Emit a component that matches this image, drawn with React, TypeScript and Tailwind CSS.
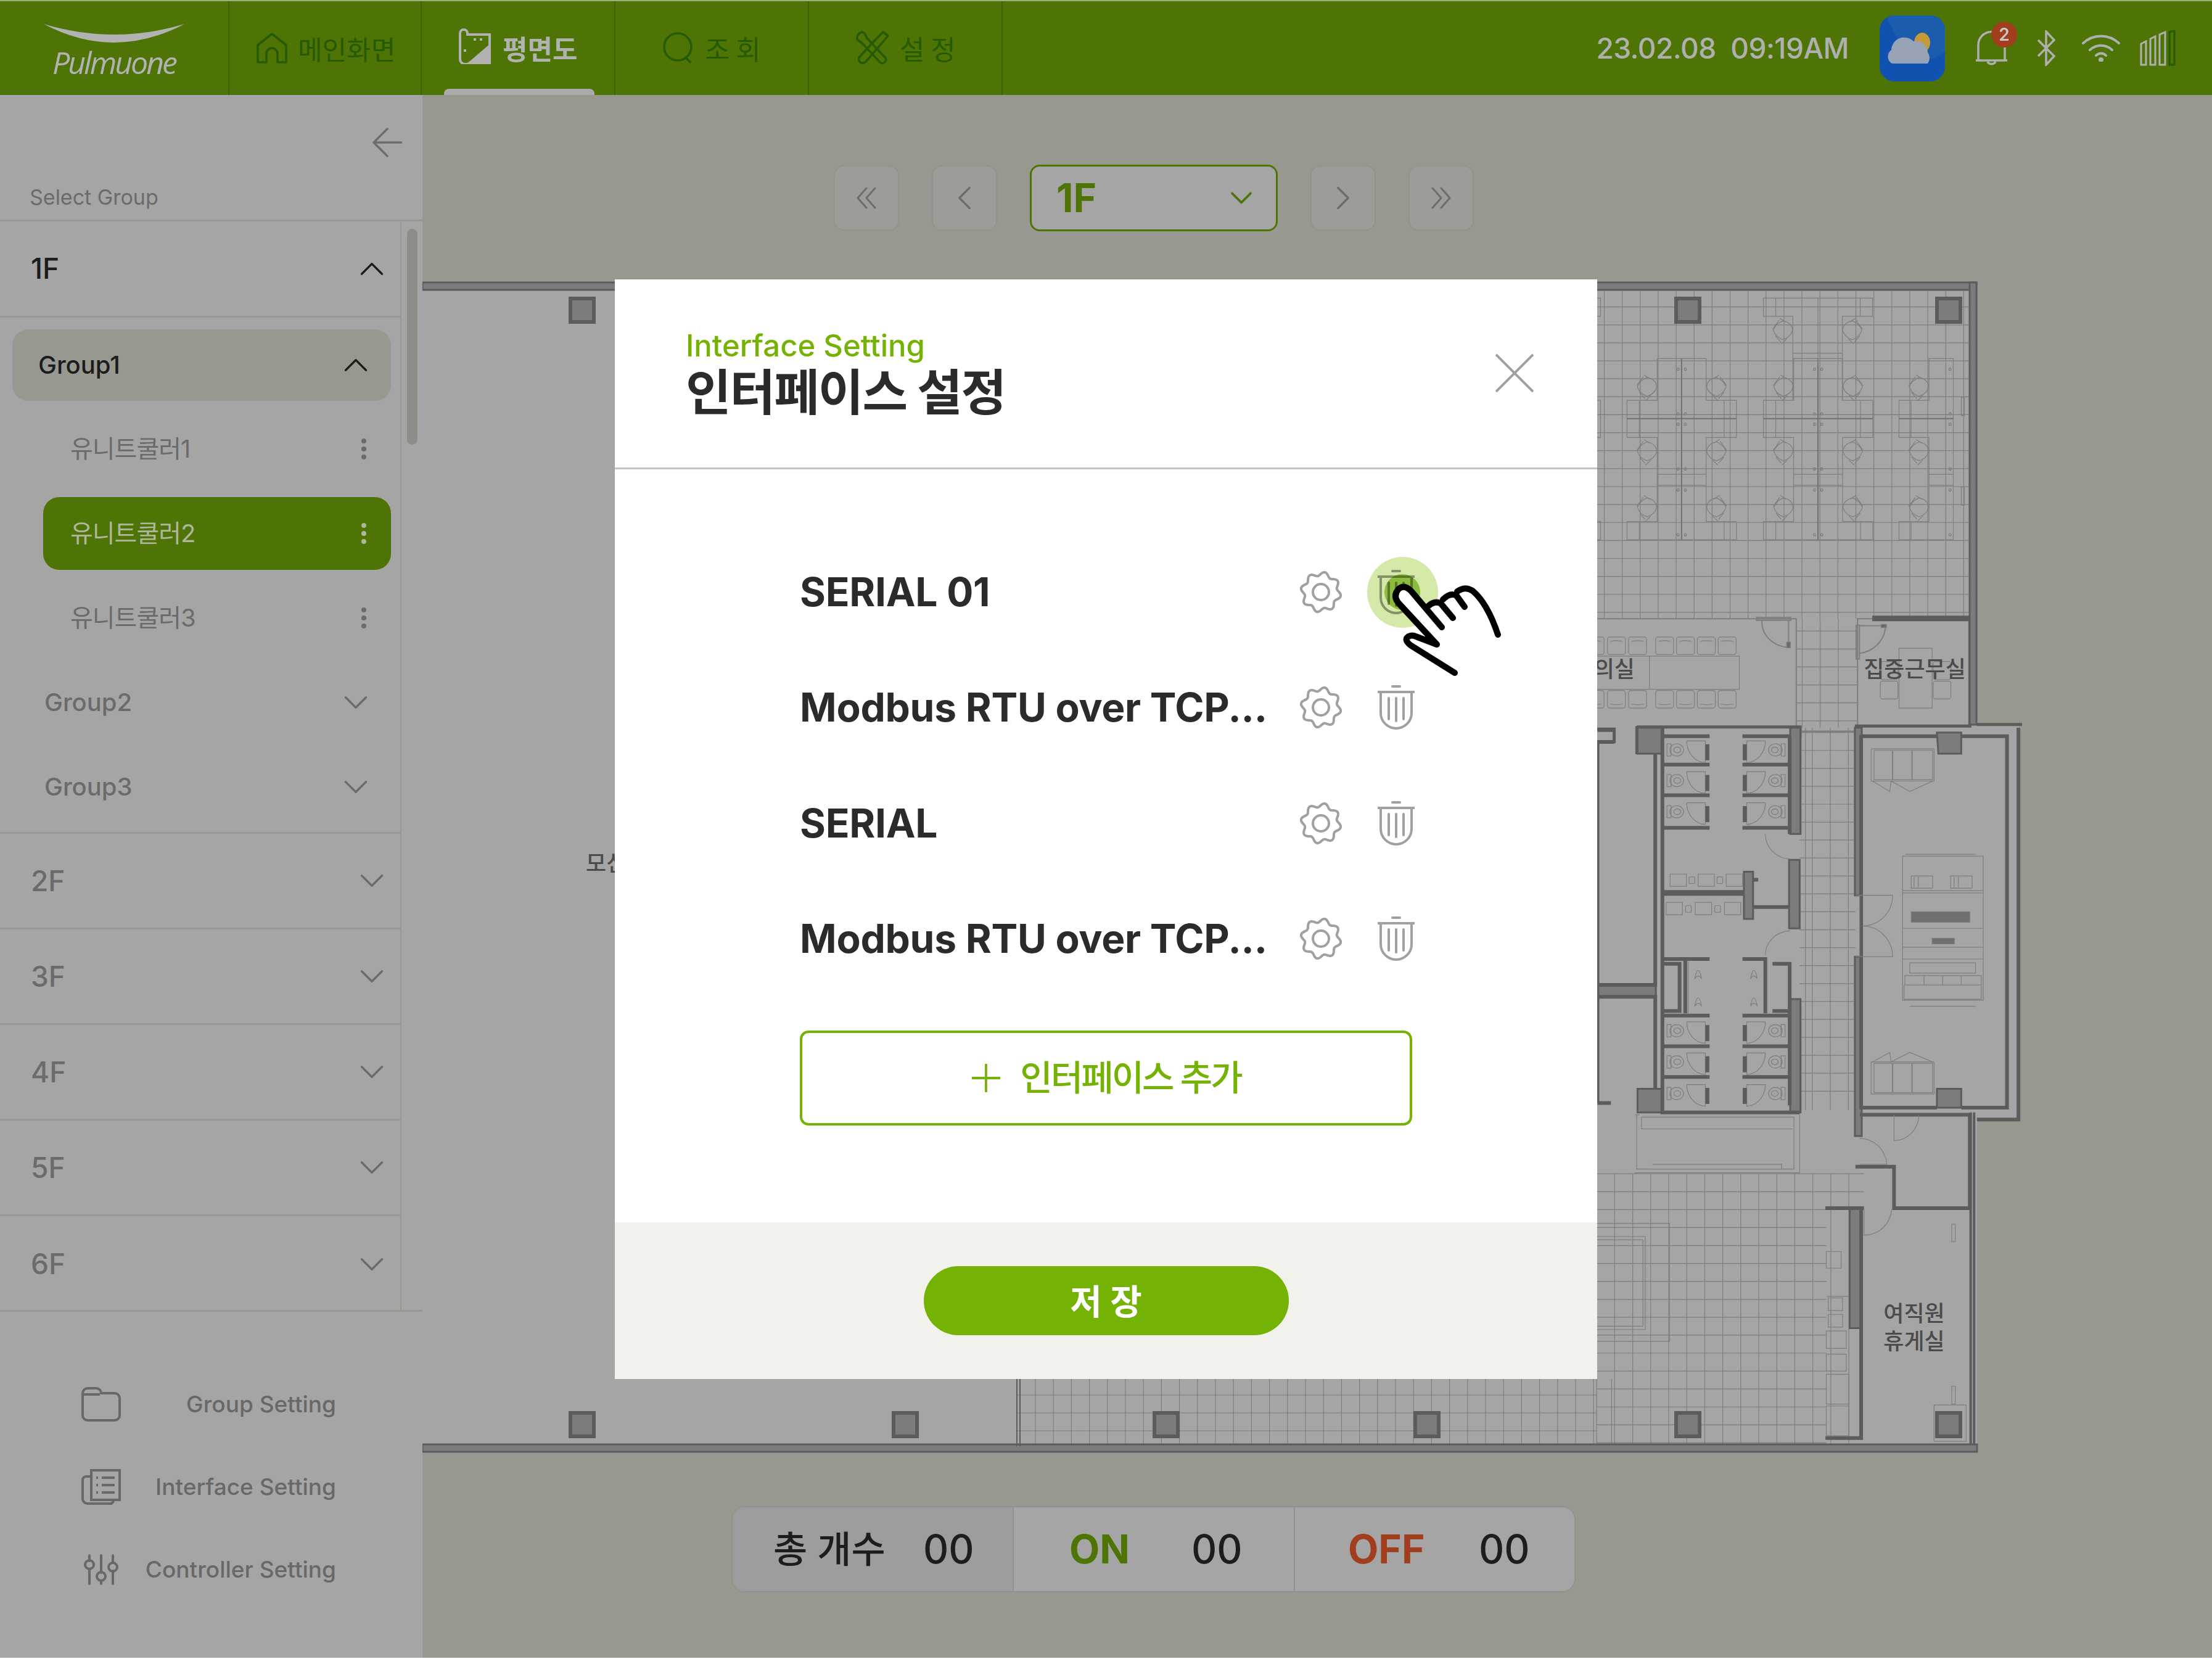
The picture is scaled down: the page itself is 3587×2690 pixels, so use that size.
import React from 'react'
import { ChevronDown, ChevronLeft, ChevronRight, ChevronUp } from 'lucide-react'

const floors = ['2F', '3F', '4F', '5F', '6F']
const units = ['유니트쿨러1', '유니트쿨러2', '유니트쿨러3']
const interfaces = ['SERIAL 01', 'Modbus RTU over TCP...', 'SERIAL', 'Modbus RTU over TCP...']
const range = (n: number) => Array.from({ length: n }, (_, i) => i)

const gearPath = (() => {
  const pts = range(97).map((i) => {
    const t = (i / 96) * Math.PI * 2
    const r = 29.5 + 3.2 * Math.cos(8 * t - Math.PI / 2)
    return `${(34 + r * Math.cos(t)).toFixed(1)} ${(34 + r * Math.sin(t)).toFixed(1)}`
  })
  return 'M' + pts.join('L') + 'Z'
})()

const Gear = () => (
  <svg width="68" height="68" viewBox="0 0 68 68" fill="none" stroke="#a0a0a0" strokeWidth="4">
    <path d={gearPath} strokeLinejoin="round" />
    <circle cx="34" cy="34" r="13" />
  </svg>
)

const Trash = () => (
  <svg width="60" height="72" viewBox="0 0 60 72" fill="none" stroke="#a0a0a0" strokeWidth="4" strokeLinecap="round">
    <path d="M24 2H36M1 11H59M5 11V45A25 25 0 0 0 55 45V11M18 21V55M30 21V58M42 21V55" />
  </svg>
)

const Hand = () => (
  <svg className="absolute left-[1003px] top-[397px] pointer-events-none" width="500" height="300" viewBox="0 0 500 300">
    <path
      d="M263 112L275 100L283 107L317 132L333 125L353 112L377 103L387 107L407 132L429 179L359 241L287 196L282 187L293 181L330 195L265 123Z"
      fill="#ffffff"
    />
    <path
      d="M359 241L287 196Q276 187 284 182Q290 179 296 182L330 195L268 128Q258 116 268 105Q277 97 288 108L338 167M317 132Q326 124 336 128L356 152M340 122Q352 110 362 116L375 134M363 109Q376 100 388 108Q412 128 429 179"
      fill="none"
      stroke="#000000"
      strokeWidth="10"
      strokeLinecap="round"
      strokeLinejoin="round"
    />
  </svg>
)

const DoubleChevron = ({ flip }: { flip?: boolean }) => (
  <svg className={flip ? '-scale-x-100' : ''} width="36" height="36" viewBox="0 0 36 36" fill="none" stroke="#6d6d6d" strokeWidth="3" strokeLinecap="round" strokeLinejoin="round">
    <path d="M18 2L4 18L18 34M32 2L18 18L32 34" />
  </svg>
)

const Chair = ({ x, y, f = 1 }: { x: number; y: number; f?: number }) => (
  <g transform={`translate(${x} ${y}) scale(${f} 1)`}>
    <path d="M-36 0Q-28 -20 0 -30Q34 -24 36 0Q30 22 0 30Q-28 22 -36 0Z" />
    <path d="M-38 -4L-14 -32M-28 18L-8 38M-12 -38L10 -26M14 28L-6 44" />
  </g>
)

const Cluster = ({ x, top }: { x: number; top?: boolean }) => (
  <g transform={`translate(${x} 0)`}>
    <path d="M296 277V410H183V528H296V795H183V853H592V795H479V528H592V410H479V277M183 468H592" />
    {!top && <path d="M296 277H479" />}
    <path d="M296 645H479M296 680H479M229 410V528M546 410V528M229 795V853M546 795V853" />
    <path d="M387 277V853" stroke="#707070" strokeWidth="2" />
    <path d="M183 468H592" stroke="#707070" strokeWidth="2" />
    {[311, 453, 486, 628, 695, 837].map((y) => (
      <g key={y}>
        <circle cx="374" cy={y} r="4" />
        <circle cx="401" cy={y} r="4" />
      </g>
    ))}
    {[367, 572, 750].map((y) => (
      <g key={y}>
        <Chair x={258} y={y} />
        <Chair x={517} y={y} f={-1} />
      </g>
    ))}
  </g>
)

const Toilet = ({ x, y, f = 1 }: { x: number; y: number; f?: number }) => (
  <g transform={`translate(${x} ${y}) scale(${f} 1)`}>
    <rect x="-34" y="-13" width="14" height="26" />
    <ellipse cx="0" cy="0" rx="24" ry="13" />
    <ellipse cx="2" cy="0" rx="12" ry="6" />
    <path d="M35 -19H100V27M35 -19A68 46 0 0 0 100 27" />
    <rect x="100" y="-12" width="14" height="34" fill="#5c5c5c" stroke="none" />
  </g>
)

const Column = ({ x, y }: { x: number; y: number }) => (
  <rect x={x - 19} y={y - 19} width="38" height="38" fill="#7c7c7c" stroke="#5c5c5c" strokeWidth="6" />
)

const Stalls = ({ ys }: { ys: number[] }) => (
  <>
    {ys.map((y) => (
      <g key={y}>
        <Toilet x={345} y={y} />
        <Toilet x={690} y={y} f={-1} />
      </g>
    ))}
  </>
)

const FloorPlan = () => (
  <svg
    className="block shrink-0 [&_*]:[vector-effect:non-scaling-stroke]"
    width="2595"
    height="1910"
    viewBox="686 450 2595 1910"
    fill="none"
    stroke="#7e7e7e"
    strokeWidth="1.2"
  >
    <path d="M686 458H3206V1175H3275V1815H3207V2355H686Z" fill="#a5a5a5" stroke="none" />

    {/* lower tiled floor */}
    {range(33).map((i) => (
      <path key={i} d={`M${1680 + i * 29.2} 2236V2343`} />
    ))}
    {[2262, 2291, 2320].map((y) => (
      <path key={y} d={`M1650 ${y}H2590`} />
    ))}

    {/* upper right: workstations */}
    <g transform="translate(2560 440) scale(0.4337 0.5102)">
      {range(21).map((i) => (
        <path key={i} d={`M${98 + i * 67.2} 60V1103`} />
      ))}
      {range(18).map((i) => (
        <path key={i} d={`M68 ${113 + i * 57.1}H1465`} />
      ))}
      {[838, 905, 973].map((x) => (
        <path key={x} d={`M${x} 1103V1450`} />
      ))}
      {range(6).map((i) => (
        <path key={i} d={`M816 ${1143 + i * 57.1}H1045`} />
      ))}
      <g>
        <rect x="68" y="85" width="16" height="58" />
        <rect x="68" y="410" width="16" height="118" />
        <rect x="68" y="795" width="16" height="58" />
        <Cluster x={0} />
        <Cluster x={510} top />
        <path d="M693 85H1101V143H988V410M693 85V143H803V410M739 85V143M1055 85V143M803 260H988M803 277H988M897 85V300" />
        <Chair x={766} y={187} />
        <Chair x={1025} y={187} f={-1} />
        <path d="M1312 277H1403V853H1200V795H1312V528H1200V410H1312V277M1200 468H1403M1245 410V528M1245 795V853M1312 645H1403M1312 680H1403" />
        <path d="M1200 468H1403" stroke="#707070" strokeWidth="2" />
        {[367, 572, 750].map((y) => (
          <Chair key={y} x={1275} y={y} />
        ))}
        {[311, 453, 486, 628, 695, 837].map((y) => (
          <circle key={y} cx="1391" cy={y} r="4" />
        ))}
        <rect x="1433" y="400" width="11" height="58" />
        <rect x="1433" y="685" width="11" height="58" />
      </g>
      {/* meeting room + focus room */}
      <path d="M68 1104H816V1445M1045 1445V1104H1100" strokeWidth="2" />
      <rect x="68" y="1223" width="535" height="105" />
      <path d="M267 1223V1328" />
      {[30, 110, 189, 290, 368, 446, 524].map((x) => (
        <g key={x}>
          <rect x={x} y="1162" width="67" height="56" rx="8" />
          <rect x={x} y="1332" width="67" height="56" rx="8" />
          <path d={`M${x + 10} 1176Q${x + 33} 1172 ${x + 57} 1176M${x + 10} 1375Q${x + 33} 1379 ${x + 57} 1375`} />
        </g>
      ))}
      <rect x="667" y="1100" width="128" height="9" strokeWidth="2" />
      <path d="M688 1108A105 80 0 0 0 787 1195V1108" strokeWidth="2" />
      <rect x="780" y="1178" width="14" height="18" fill="#6a6a6a" />
      <rect x="1040" y="1124" width="12" height="108" strokeWidth="2" />
      <path d="M1050 1126H1150A110 92 0 0 1 1050 1214" strokeWidth="2" />
      <rect x="1133" y="1122" width="20" height="10" fill="#6a6a6a" />
      <rect x="1200" y="1198" width="124" height="190" />
      {[1240, 1302].map((y) => (
        <g key={y}>
          <rect x="1130" y={y} width="66" height="57" rx="8" />
          <rect x="1328" y={y} width="66" height="57" rx="8" />
        </g>
      ))}
      {/* walls */}
      <path d="M1465 1103V1445H1035M1490 1440H1660" stroke="#5c5c5c" strokeWidth="5" />
      <path d="M1100 1103H1465" stroke="#5c5c5c" strokeWidth="9" />
      <path d="M220 1448H830V1480M68 1455H135V1495H68" stroke="#5c5c5c" strokeWidth="5" />
      <path d="M830 1462H1035" strokeWidth="3" />
      <path d="M220 1450H312V1530H220Z" fill="#7c7c7c" stroke="#5c5c5c" strokeWidth="5" />
    </g>

    {/* lower right: toilets, machine room, rest room */}
    <g transform="translate(2560 1180) scale(0.4637 0.7653)">
      {[795, 819, 882, 945].map((x) => (
        <path key={x} d={`M${x} 0V810`} />
      ))}
      {range(21).map((i) => (
        <path key={i} d={`M775 ${10 + i * 38}H970`} />
      ))}
      {range(15).map((i) => (
        <path key={i} d={`M${65 + i * 63} 945V1520`} />
      ))}
      {range(16).map((i) => (
        <path key={i} d={`M65 ${945 + i * 38}H${i < 2 ? 1000 : 868}`} />
      ))}

      <g fill="#7c7c7c" stroke="#5c5c5c" strokeWidth="3">
        <path d="M208 0H295V55H208Z" />
        <path d="M208 765H295V815H208Z" />
        <path d="M742 0H778V225H742ZM738 280H775V425H738ZM742 575H778V815H742Z" />
        <path d="M580 305H612V405H580Z" />
        <path d="M68 545H272V570H68Z" />
        <path d="M968 0H992V355H968ZM968 485H992V865H968ZM950 1020H990V1272H950Z" />
        <path d="M1255 10H1340V55H1260ZM1255 805V765H1340V805Z" />
      </g>
      <g stroke="#5c5c5c" strokeWidth="6">
        <path d="M65 30H125M270 55V545H68M68 30V795M68 570H270V765M68 795H115M68 5H125" />
        <path d="M295 0V815H775M295 225V485M295 18H460M575 18H740M740 18V225M295 212H460M575 212H740M295 348H580M295 352H580M612 380H740M612 322H630" />
        <path d="M295 490H460M575 490H655V605M375 490V605M295 500H355V600H295M680 500H740V600H680M295 610H460M575 610H740M740 575V800" />
        <path d="M295 78H460M295 143H460M575 78H740M575 143H740M295 675H460M295 740H460M575 675H740M575 740H740" />
        <path d="M990 18H1255M1340 18H1500V805H1340M1255 805H990V15" />
        <path d="M970 930H1105V1018H1370V820H985M865 1018H1000M865 1505H990V1272M990 1020V1505" />
      </g>
      <path d="M1373 815V1530M1385 815V1530" stroke="#5c5c5c" strokeWidth="4" />
      <path d="M1395 830H1540V0" stroke="#5c5c5c" strokeWidth="6" />
      <path d="M0 1530H1395" stroke="#5c5c5c" strokeWidth="8" />
      <path d="M0 1520H1385" stroke="#5c5c5c" strokeWidth="2" />

      <Stalls ys={[47, 112, 178, 642, 708, 775]} />

      {/* sinks */}
      {[322, 420, 518].map((x) => (
        <rect key={x} x={x} y="310" width="57" height="26" />
      ))}
      {[388, 486].map((x) => (
        <rect key={x} x={x} y="316" width="20" height="14" rx="3" />
      ))}
      {[308, 410, 512].map((x) => (
        <rect key={x} x={x} y="370" width="57" height="26" />
      ))}
      {[376, 478].map((x) => (
        <rect key={x} x={x} y="377" width="20" height="14" rx="3" />
      ))}
      {[
        [420, 520],
        [420, 578],
        [615, 520],
        [615, 578],
      ].map(([x, y]) => (
        <path key={`${x}${y}`} d={`M${x - 12} ${y + 12}Q${x} ${y - 24} ${x + 12} ${y + 12}Q${x} ${y} ${x - 12} ${y + 12}Z`} />
      ))}
      <path d="M385 495V605M655 225A90 52 0 0 0 742 278M655 482A90 52 0 0 1 742 430" />

      {/* lobby desk */}
      <path d="M205 820V935H755V825H222V850H750M198 820H215M198 943H775V820M260 925H712V935" />
      <path d="M65 1050H320V1300H65M65 1078H235V1275H65M65 1085H227V1268H65" />
      <path d="M868 1110H920V1145H868ZM868 1205H948M875 1208H925V1235H875ZM875 1243H925V1270H875ZM868 1278H938V1315H868ZM868 1327H938V1363H868ZM868 1370H947V1433H868ZM868 1437H947V1500H868Z" />
      <path d="M1105 820V875A90 55 0 0 0 1192 820M1000 1020V1075A95 60 0 0 0 1097 1020M985 870A95 60 0 0 1 1080 925H985" />
      <rect x="1307" y="1052" width="12" height="37" />
      <rect x="1307" y="1395" width="12" height="38" />
      <rect x="1245" y="1435" width="112" height="77" />
      <Column x={1299} y={1477} />
      <Column x={385} y={1477} />

      {/* machine room */}
      {[45, 708].map((y) => (
        <g key={y}>
          <rect x="1025" y={y} width="220" height="68" />
          <rect x="1035" y={y + 3} width="205" height="62" />
          <path d={`M1100 ${y + 3}V${y + 65}M1168 ${y + 3}V${y + 65}`} strokeWidth="2" />
        </g>
      ))}
      <path d="M1030 113L1090 135L1095 113L1160 135L1240 113M1030 708L1090 688L1095 708L1160 688L1240 708" />
      <rect x="1135" y="272" width="282" height="305" />
      <path d="M1145 268H1390M1135 345H1415M1135 350H1415M1135 425H1415M1135 465H1415M1135 490H1415M1160 498H1390V520H1160ZM1143 525H1410V545H1143ZM1210 525V545M1275 525V545M1340 525V545M1140 545V575H1410V545M1160 590H1390" />
      <path d="M1165 314H1240V340H1165ZM1303 314H1378V340H1303ZM1175 316V338M1190 316V338M1315 316V338M1330 316V338" />
      <rect x="1165" y="390" width="205" height="22" fill="#6f6f6f" />
      <rect x="1238" y="446" width="78" height="12" fill="#6f6f6f" />
      <path d="M970 355H1100A105 65 0 0 1 995 420A105 65 0 0 1 1100 485H970M985 355V485" />
    </g>

    {/* outer walls */}
    <rect x="686" y="458" width="2520" height="12" fill="#7c7c7c" stroke="#5c5c5c" strokeWidth="3" />
    <rect x="3195" y="458" width="11" height="717" fill="#7c7c7c" stroke="#5c5c5c" strokeWidth="3" />
    <rect x="686" y="2342" width="2521" height="12" fill="#7c7c7c" stroke="#5c5c5c" strokeWidth="3" />
    <path d="M1650 2236V2345M1655 2236V2345" stroke="#5c5c5c" strokeWidth="2" />
    {[
      [945, 503],
      [2738, 503],
      [3161, 503],
      [945, 2310],
      [1469, 2310],
      [1892, 2310],
      [2315, 2310],
      [2738, 2310],
      [3161, 2310],
    ].map(([x, y]) => (
      <Column key={`${x}-${y}`} x={x} y={y} />
    ))}

    <g stroke="none" fill="#4b4b4b" fontSize="36" fontWeight="500">
      <text x="951" y="1413">모신</text>
      <text x="2652" y="1098" textAnchor="end">회의실</text>
      <text x="3106" y="1098" textAnchor="middle">집중근무실</text>
      <text x="3105" y="2143" textAnchor="middle">여직원</text>
      <text x="3105" y="2188" textAnchor="middle">휴게실</text>
    </g>
  </svg>
)

const NavItem = ({ label, children, active }: { label: string; children: React.ReactNode; active?: boolean }) => (
  <div className="relative w-[314px] h-full flex items-center pl-[32px] gap-[17px] border-r-[2px] border-[#406203]">
    {children}
    <span className={`text-[44px] ${active ? 'text-[#b2b2b2] font-bold' : 'text-[#265a00]'}`}>{label}</span>
    {active && <div className="absolute left-[36px] bottom-0 w-[244px] h-[10px] rounded-t-[8px] bg-[#aaaaaa]" />}
  </div>
)

const Header = () => (
  <div className="h-[154px] shrink-0 flex items-center bg-[#4e7405] border-t-[2px] border-[#9aad72]">
    <div className="w-[372px] h-full flex flex-col items-center pt-[37px] border-r-[2px] border-[#406203]">
      <svg width="228" height="32" viewBox="73 39 228 32">
        <path d="M73 39Q187 73 301 39Q187 99 73 39Z" fill="#b2b2b2" />
      </svg>
      <span className="mt-[2px] font-['Open_Sans'] italic text-[50px] leading-[56px] text-[#b2b2b2] tracking-[-3px] font-normal">
        Pulmuone
      </span>
    </div>
    <div className="w-[312px] h-full flex items-center pl-[44px] gap-[17px] border-r-[2px] border-[#406203]">
      <svg width="50" height="50" viewBox="0 0 50 50" fill="none" stroke="#265a00" strokeWidth="3.5" strokeLinejoin="round">
        <path d="M2 20L25 2L48 20V48H34V34A9 9 0 0 0 16 34V48H2Z" />
      </svg>
      <span className="text-[43px] text-[#265a00]">메인화면</span>
    </div>
    <NavItem label="평면도" active>
      <svg className="-mt-[6px] ml-[28px]" width="54" height="58" viewBox="0 0 54 58" fill="none" stroke="#b2b2b2" strokeWidth="4">
        <path d="M14 10H50V40L14 58H10A8 8 0 0 1 2 50V8A6 6 0 0 1 14 8Z" />
        <path d="M12 58L52 24V58Z" fill="#b2b2b2" stroke="none" />
        <path d="M24 18H40M8 36H14" strokeDasharray="4 6" />
      </svg>
    </NavItem>
    <NavItem label="조 회">
      <svg className="ml-[44px]" width="52" height="52" viewBox="0 0 52 52" fill="none" stroke="#265a00" strokeWidth="3.5">
        <circle cx="25" cy="24" r="22" />
        <path d="M38 41L46 50" />
      </svg>
    </NavItem>
    <NavItem label="설 정">
      <svg className="ml-[42px]" width="56" height="56" viewBox="0 0 56 56" fill="none" stroke="#265a00" strokeWidth="3.5" strokeLinejoin="round">
        <path d="M12 2A10 10 0 0 0 4 14L12 20L42 52A6 6 0 0 0 50 44L20 12L16 4ZM46 2L54 8L44 20L18 50A6 6 0 0 1 8 42L34 14Z" />
      </svg>
    </NavItem>
    <div className="flex-1 h-full flex items-center justify-end pr-[59px] font-['Inter']">
      <span className="text-[46px] font-medium text-[#b0b0b0] tracking-[-0.5px] whitespace-pre">23.02.08  09:19AM</span>
      <div className="ml-[50px] relative w-[106px] h-[107px] rounded-[24px] overflow-hidden bg-[#1152b0]">
        <svg className="absolute left-0 top-0" width="106" height="107" viewBox="0 0 106 107">
          <path d="M10 0H106V60Q60 85 42 60Q30 40 10 0Z" fill="#1b5dac" />
          <ellipse cx="69" cy="44" rx="13" ry="16" fill="#c49a3a" />
          <path d="M20 78A13 13 0 0 1 19 56A21 21 0 0 1 55 42A19 19 0 0 1 78 60A15 15 0 0 1 78 78Z" fill="#98a4b5" />
        </svg>
      </div>
      <div className="ml-[49px] relative w-[68px] h-[60px]">
        <svg className="absolute left-0 top-0" width="54" height="60" viewBox="0 0 54 60" fill="none" stroke="#b0b0b0" strokeWidth="3.5">
          <path d="M5 50V25A21 21 0 0 1 48 25V50M1 50H52M20 52A7 6 0 0 0 33 52" />
        </svg>
        <div className="absolute left-[26px] -top-[13px] w-[42px] h-[42px] rounded-full bg-[#a03e1e] flex items-center justify-center text-[28px] font-semibold text-[#c7c7c7]">
          2
        </div>
      </div>
      <svg className="ml-[32px]" width="30" height="58" viewBox="0 0 30 58" fill="none" stroke="#b0b0b0" strokeWidth="3.5">
        <path d="M2 16L28 42L15 56V2L28 16L2 42" />
      </svg>
      <svg className="ml-[43px]" width="62" height="44" viewBox="0 0 62 44" fill="none" stroke="#b0b0b0" strokeWidth="4" strokeLinecap="round">
        <path d="M2 14A42 42 0 0 1 60 14M13 25A26 26 0 0 1 49 25M23 34A11 11 0 0 1 39 34" />
        <circle cx="31" cy="41" r="2" fill="#b0b0b0" />
      </svg>
      <svg className="ml-[32px]" width="58" height="58" viewBox="0 0 58 58" fill="none" stroke="#b0b0b0" strokeWidth="3">
        <path d="M2 22L10 18V56H2ZM17 14L25 10V56H17ZM32 7L41 3V56H32Z" />
        <path d="M48 3L56 0V56H48Z" stroke="#265a00" />
      </svg>
    </div>
  </div>
)

const Dots = ({ color }: { color: string }) => (
  <div className="flex flex-col gap-[5px] mr-[40px]">
    {range(3).map((i) => (
      <div key={i} className={`w-[8px] h-[8px] rounded-full ${color}`} />
    ))}
  </div>
)

const Sidebar = () => (
  <div className="w-[685px] shrink-0 flex flex-col bg-[#a5a5a5] font-['Inter','Noto_Sans_CJK_KR',sans-serif]">
    <div className="h-[205px] shrink-0 flex flex-col border-b-[3px] border-[#979890]">
      <div className="flex justify-end pr-[33px] pt-[53px]">
        <svg width="48" height="48" viewBox="0 0 48 48" fill="none" stroke="#6d6d6d" strokeWidth="3.5" strokeLinecap="round" strokeLinejoin="round">
          <path d="M24 2L2 24L24 46M2 24H47" />
        </svg>
      </div>
      <span className="mt-[43px] pl-[48px] text-[34px] leading-[44px] text-[#6b6b6b]">Select Group</span>
    </div>
    <div className="h-[1768px] shrink-0 flex border-b-[3px] border-[#979890]">
      <div className="w-[651px] flex flex-col border-r-[2px] border-[#979890]">
        <div className="h-[156px] shrink-0 flex items-center justify-between pl-[50px] pr-[13px] border-b-[3px] border-[#979890]">
          <span className="text-[46px] font-medium text-[#1c1c1c]">1F</span>
          <ChevronUp size={66} strokeWidth={1.2} className="text-[#1c1c1c]" />
        </div>
        <div className="h-[837px] shrink-0 flex flex-col pt-[19px] pl-[20px] pr-[15px] gap-[19px] border-b-[3px] border-[#979890]">
          <div className="h-[116px] shrink-0 flex items-center justify-between pl-[42px] pr-[24px] rounded-[26px] bg-[#979890]">
            <span className="text-[40px] font-medium text-[#1c1c1c]">Group1</span>
            <ChevronUp size={66} strokeWidth={1.2} className="text-[#1c1c1c]" />
          </div>
          {units.map((u, i) => (
            <div
              key={u}
              className={`h-[118px] shrink-0 ml-[50px] flex items-center justify-between pl-[44px] rounded-[26px] ${
                i === 1 ? 'bg-[#4e7405]' : ''
              }`}
            >
              <span className={`text-[40px] tracking-[-1px] ${i === 1 ? 'text-[#aeb79c]' : 'text-[#6b6b6b]'}`}>{u}</span>
              <Dots color={i === 1 ? 'bg-[#aeb79c]' : 'bg-[#6b6b6b]'} />
            </div>
          ))}
          {['Group2', 'Group3'].map((g) => (
            <div key={g} className="h-[118px] shrink-0 flex items-center justify-between pl-[52px] pr-[24px]">
              <span className="text-[40px] font-medium text-[#6b6b6b]">{g}</span>
              <ChevronDown size={66} strokeWidth={1.2} className="text-[#6b6b6b]" />
            </div>
          ))}
        </div>
        {floors.map((f, i) => (
          <div
            key={f}
            className={`h-[155px] shrink-0 flex items-center justify-between pl-[50px] pr-[13px] ${
              i < floors.length - 1 ? 'border-b-[3px] border-[#979890]' : ''
            }`}
          >
            <span className="text-[46px] font-medium text-[#6b6b6b]">{f}</span>
            <ChevronDown size={66} strokeWidth={1.2} className="text-[#6b6b6b]" />
          </div>
        ))}
      </div>
      <div className="flex-1 pl-[9px] pt-[12px]">
        <div className="w-[17px] h-[350px] rounded-full bg-[#8c8d87]" />
      </div>
    </div>
    <div className="flex-1 flex flex-col pl-[132px] pr-[140px] pt-[121px] gap-[76px] text-[37px] font-medium text-[#686868]">
      <div className="h-[58px] flex items-center justify-between">
        <svg width="64" height="56" viewBox="0 0 64 56" fill="none" stroke="#686868" strokeWidth="4" strokeLinejoin="round">
          <path d="M2 46V10A8 8 0 0 1 10 2H24A8 8 0 0 1 32 10H54A8 8 0 0 1 62 18V46A8 8 0 0 1 54 54H10A8 8 0 0 1 2 46ZM2 12H30" />
        </svg>
        <span>Group Setting</span>
      </div>
      <div className="h-[58px] flex items-center justify-between">
        <svg width="64" height="58" viewBox="0 0 64 58" fill="none" stroke="#686868" strokeWidth="4">
          <path d="M16 12H8A6 6 0 0 0 2 18V48A8 8 0 0 0 10 56H44A6 6 0 0 0 52 50" />
          <rect x="16" y="2" width="46" height="48" />
          <path d="M24 14H27M33 14H54M24 26H27M33 26H54M24 38H27M33 38H54" />
        </svg>
        <span>Interface Setting</span>
      </div>
      <div className="h-[58px] flex items-center justify-between">
        <svg className="ml-[4px]" width="56" height="50" viewBox="0 0 56 50" fill="none" stroke="#686868" strokeWidth="4" strokeLinecap="round">
          <path d="M9 2V11M9 24V48M28 2V30M28 43V48M47 2V14M47 27V48" />
          <circle cx="9" cy="17" r="7" />
          <circle cx="28" cy="36" r="7" />
          <circle cx="47" cy="21" r="7" />
        </svg>
        <span>Controller Setting</span>
      </div>
    </div>
  </div>
)

const PageButton = ({ children }: { children: React.ReactNode }) => (
  <div className="w-[106px] h-[106px] rounded-[16px] bg-[#9c9d98] border-[2px] border-[#92938b] flex items-center justify-center text-[#6d6d6d]">
    {children}
  </div>
)

const Main = () => (
  <div className="flex-1 flex flex-col pt-[113px] bg-[#979890] font-['Inter','Noto_Sans_CJK_KR',sans-serif]">
    <div className="h-[108px] flex items-center pl-[667px] gap-[53px]">
      <PageButton>
        <DoubleChevron />
      </PageButton>
      <PageButton>
        <ChevronLeft size={66} strokeWidth={1.2} />
      </PageButton>
      <div className="w-[402px] h-[108px] rounded-[16px] border-[3px] border-[#4e7405] bg-[#a5a5a5] flex items-center justify-between pl-[40px] pr-[26px]">
        <span className="text-[64px] font-bold text-[#4e7405]">1F</span>
        <ChevronDown size={60} strokeWidth={1.5} className="text-[#4e7405]" />
      </div>
      <PageButton>
        <ChevronRight size={66} strokeWidth={1.2} />
      </PageButton>
      <PageButton>
        <DoubleChevron flip />
      </PageButton>
    </div>
    <div className="mt-[75px]">
      <FloorPlan />
    </div>
    <div className="mt-[82px] ml-[501px] w-[1369px] h-[140px] flex rounded-[22px] overflow-hidden border-[2px] border-[#92938b] text-[64px] font-medium text-[#1d1d1d]">
      <div className="w-[456px] flex items-center bg-[#9d9d9d] border-r-[2px] border-[#92938b] pl-[66px]">
        <span className="w-[243px] text-[60px] font-medium">총 개수</span>
        <span>00</span>
      </div>
      <div className="w-[456px] flex items-center bg-[#a5a5a5] border-r-[2px] border-[#92938b] pl-[90px]">
        <span className="w-[198px] font-bold text-[#4e7405]">ON</span>
        <span>00</span>
      </div>
      <div className="flex-1 flex items-center bg-[#a5a5a5] pl-[86px]">
        <span className="w-[212px] font-bold text-[#a03e1e]">OFF</span>
        <span>00</span>
      </div>
    </div>
  </div>
)

const Modal = () => (
  <div className="absolute left-[997px] top-[453px] w-[1593px] h-[1783px] flex flex-col bg-white font-['Inter','Noto_Sans_CJK_KR',sans-serif]">
    <div className="h-[308px] shrink-0 relative pl-[115px] pt-[78px] border-b-[3px] border-[#c4c4c4]">
      <div className="text-[49px] leading-[60px] font-medium text-[#74b204]">Interface Setting</div>
      <div className="text-[80px] leading-[90px] font-bold text-[#2b2b2b] tracking-[-2px]">인터페이스 설정</div>
      <svg className="absolute left-[1428px] top-[121px]" width="62" height="62" viewBox="0 0 62 62" fill="none" stroke="#a0a0a0" strokeWidth="4">
        <path d="M1 1L61 61M61 1L1 61" />
      </svg>
    </div>
    <div className="flex-1 flex flex-col pl-[300px] pt-[105px]">
      {interfaces.map((name, i) => (
        <div key={i} className="h-[187.5px] shrink-0 flex items-center">
          <span className="w-[811px] text-[64px] font-bold text-[#2b2b2b] tracking-[-0.25px] whitespace-nowrap">{name}</span>
          <Gear />
          <div className="relative ml-[58px]">
            <Trash />
            {i === 0 && (
              <>
                <div className="absolute left-[-17px] top-[-21px] w-[115px] h-[115px] rounded-full bg-[#d4e8a8] mix-blend-multiply" />
                <div className="absolute left-[11px] top-[7px] w-[58px] h-[58px] rounded-full bg-[#a8cf5e] mix-blend-multiply" />
              </>
            )}
          </div>
        </div>
      ))}
      <div className="mt-[55px] w-[993px] h-[154px] rounded-[14px] border-[4px] border-[#74b204] flex items-center justify-center gap-[30px] text-[57px] font-medium text-[#74b204] tracking-[-3px]">
        <svg width="50" height="50" viewBox="0 0 52 52" stroke="#74b204" strokeWidth="4">
          <path d="M26 2V50M2 26H50" />
        </svg>
        인터페이스 추가
      </div>
    </div>
    <div className="h-[254px] shrink-0 flex items-center justify-center bg-[#f2f1ec]">
      <div className="w-[592px] h-[112px] pt-[4px] rounded-full bg-[#74b204] flex items-center justify-center text-[56px] font-bold text-white">
        저 장
      </div>
    </div>
    <Hand />
  </div>
)

export default function App() {
  return (
    <div className="relative w-[3587px] h-[2688px] flex flex-col overflow-hidden font-['Noto_Sans_CJK_KR',sans-serif]">
      <Header />
      <div className="flex-1 flex min-h-0">
        <Sidebar />
        <Main />
      </div>
      <Modal />
    </div>
  )
}
